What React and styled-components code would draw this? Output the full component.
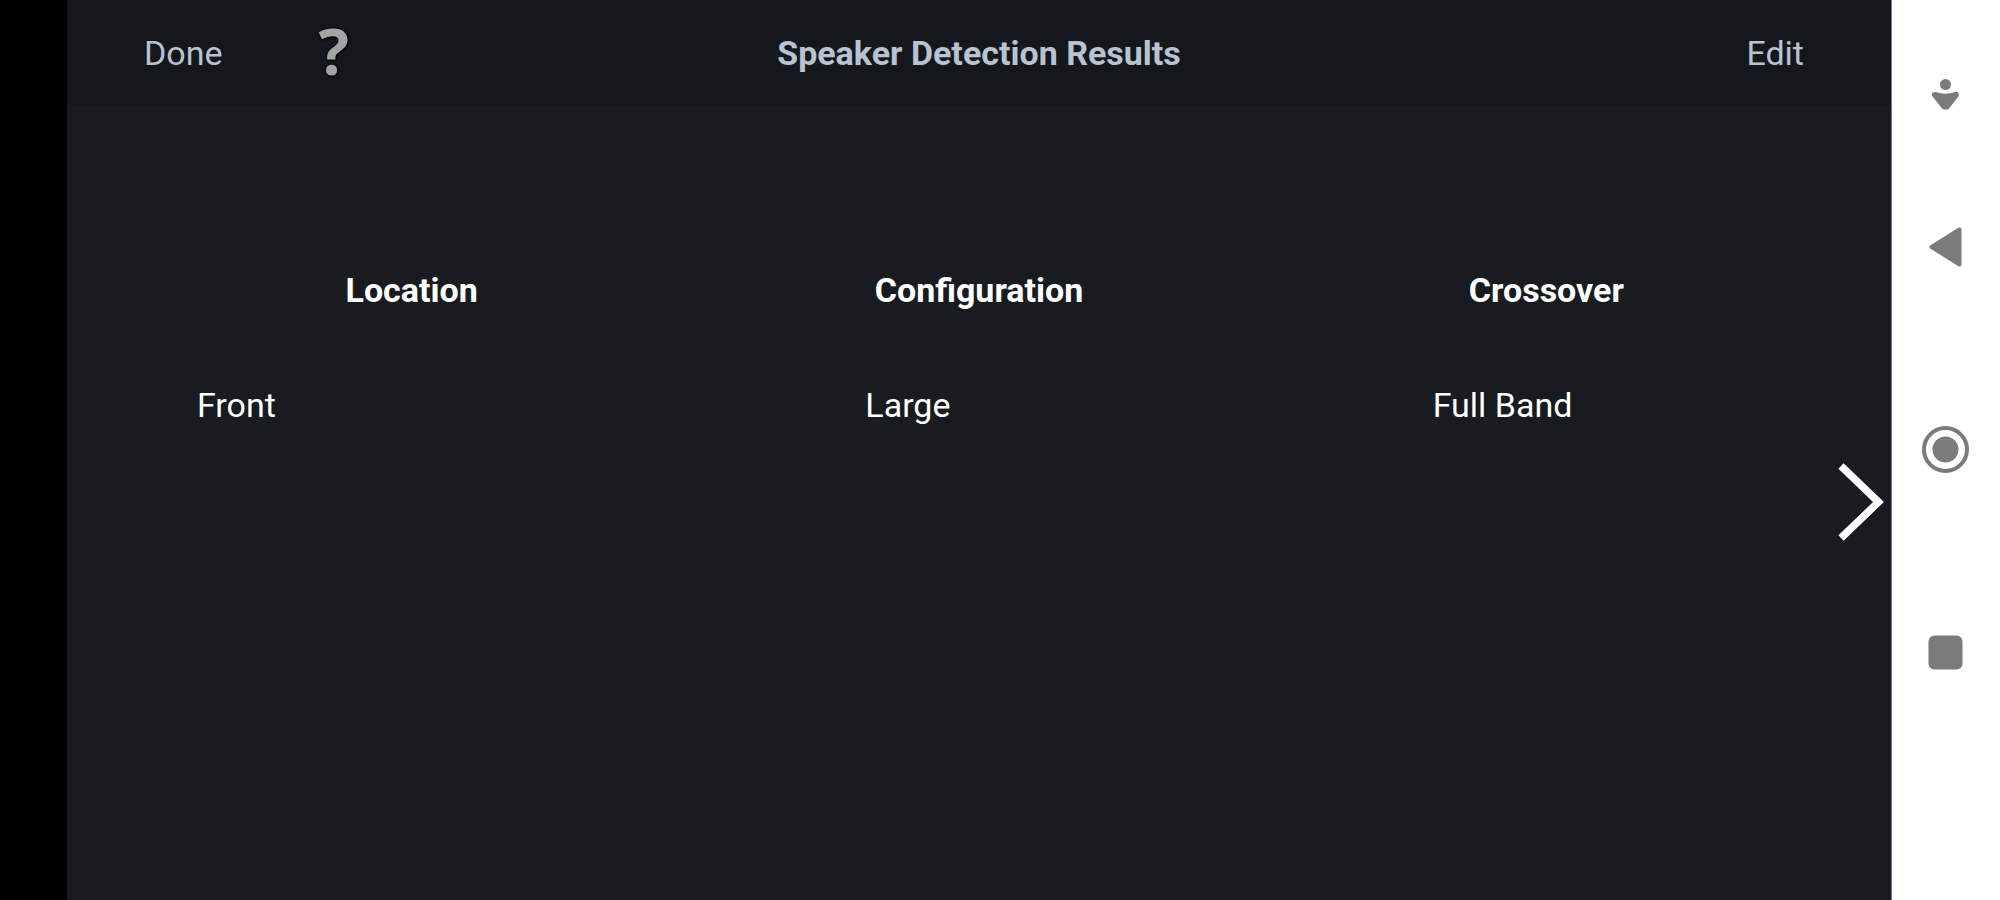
import React from "react";
import styled, { createGlobalStyle } from "styled-components";

const GlobalStyle = createGlobalStyle`
	* {
		box-sizing: border-box;
	}
	body {
		margin: 0;
		background: #000;
		font-family: Roboto, "Liberation Sans", sans-serif;
		font-size: 34px;
		line-height: 40px;
	}
`;

const GUTTER = "61px";

const Screen = styled.div`
	display: grid;
	grid-template-columns: minmax(0, 1fr) 109px;
	min-height: 100vh;
	padding-left: 67px;
`;

const Main = styled.main`
	display: flex;
	flex-direction: column;
	background: #181b20;
	color: #fff;
`;

const Header = styled.header`
	display: grid;
	grid-template-columns: 1fr auto 1fr;
	align-items: center;
	height: 105px;
	padding: 0 77px;
	background: #14171b;
	color: #b8c3d1;
`;

const Title = styled.h1`
	margin: 0;
	font-size: 34px;
	font-weight: 700;
`;

const HeaderGroup = styled.div`
	display: flex;
	align-items: center;
	justify-content: ${(props) => (props.$end ? "flex-end" : "flex-start")};
	gap: 96px;
`;

const PlainButton = styled.button`
	border: 0;
	padding: 0;
	background: none;
	color: inherit;
	font: inherit;
	cursor: pointer;
`;

const TextButton = styled(PlainButton)`
	padding: 0 ${(props) => (props.$inset ? "10px" : "0")} 0 0;
`;

const HelpButton = styled(PlainButton)`
	padding-bottom: 4px;
	font-family: "Open Sans", sans-serif;
	font-size: 64px;
	font-weight: 700;
	line-height: 64px;
	color: #a3a3a3;
	text-shadow: 0 0 3px #000, 1px 1px 2px #000;
`;

const Body = styled.div`
	flex: 1;
	display: grid;
	grid-template-columns: ${GUTTER} minmax(0, 1fr) ${GUTTER};
`;

const Results = styled.table`
	grid-column: 2;
	align-self: start;
	width: 100%;
	margin-top: 127px;
	border-collapse: collapse;
	table-layout: fixed;
`;

const HeadCell = styled.th`
	height: 115px;
	padding: 0;
	font-weight: 700;
	text-align: center;
`;

const Cell = styled.td`
	height: 115px;
	padding: 0 0 0 170px;
	&:first-child {
		padding-left: 69px;
	}
`;

const NextButton = styled(PlainButton)`
	display: flex;
	align-items: center;
	justify-content: flex-end;
	padding-right: 6px;
`;

const SystemBar = styled.nav`
	display: grid;
	grid-template-rows: 1fr auto 1fr;
	justify-items: center;
	border-left: 1px solid #808184;
	background: #fff;
	color: #7b7b7b;
`;

const AccessSlot = styled.div`
	align-self: end;
	padding-bottom: 104px;
`;

const NavKeys = styled.div`
	display: flex;
	flex-direction: column;
	gap: 155px;
`;

const NavButton = styled(PlainButton)`
	display: block;
	width: 48px;
	height: 48px;
	svg {
		display: block;
	}
`;

const NavIcon = ({ children }) => (
	<svg width="48" height="48" viewBox="0 0 48 48" fill="currentColor" stroke="currentColor" strokeWidth="0" strokeLinejoin="round">
		{children}
	</svg>
);

const columns = ["Location", "Configuration", "Crossover"];
const speakers = [["Front", "Large", "Full Band"]];

export default () => {
	return (
		<>
			<GlobalStyle />
			<Screen>
				<Main>
					<Header>
						<HeaderGroup>
							<TextButton>Done</TextButton>
							<HelpButton aria-label="Help">?</HelpButton>
						</HeaderGroup>
						<Title>Speaker Detection Results</Title>
						<HeaderGroup $end>
							<TextButton $inset>Edit</TextButton>
						</HeaderGroup>
					</Header>
					<Body>
						<Results>
							<thead>
								<tr>
									{columns.map((name) => (
										<HeadCell key={name} scope="col">{name}</HeadCell>
									))}
								</tr>
							</thead>
							<tbody>
								{speakers.map((row) => (
									<tr key={row[0]}>
										{row.map((value) => (
											<Cell key={value}>{value}</Cell>
										))}
									</tr>
								))}
							</tbody>
						</Results>
						<NextButton aria-label="Next">
							<svg width="48" height="80" viewBox="0 0 48 80" fill="none" stroke="#fff" strokeWidth="7.5">
								<path d="M4 3L41.5 39L4 75" />
							</svg>
						</NextButton>
					</Body>
				</Main>
				<SystemBar>
					<AccessSlot>
						<NavButton aria-label="Accessibility">
							<NavIcon>
								<circle cx="23.5" cy="13.5" r="5.5" />
								<path d="M12.8 23.7Q23.5 27.5 34.2 23.7L24.9 35.7H22.1Z" strokeWidth="5.5" />
							</NavIcon>
						</NavButton>
					</AccessSlot>
					<NavKeys>
						<NavButton aria-label="Back">
							<NavIcon>
								<path d="M9.5 24L37.5 6.5V41.5Z" strokeWidth="4" />
							</NavIcon>
						</NavButton>
						<NavButton aria-label="Home">
							<NavIcon>
								<circle cx="23.5" cy="23.5" r="21.5" fill="none" strokeWidth="4" />
								<circle cx="23.5" cy="23.5" r="13" />
							</NavIcon>
						</NavButton>
						<NavButton aria-label="Recent apps">
							<NavIcon>
								<rect x="6.5" y="6.5" width="34" height="34" rx="6" />
							</NavIcon>
						</NavButton>
					</NavKeys>
				</SystemBar>
			</Screen>
		</>
	);
};
